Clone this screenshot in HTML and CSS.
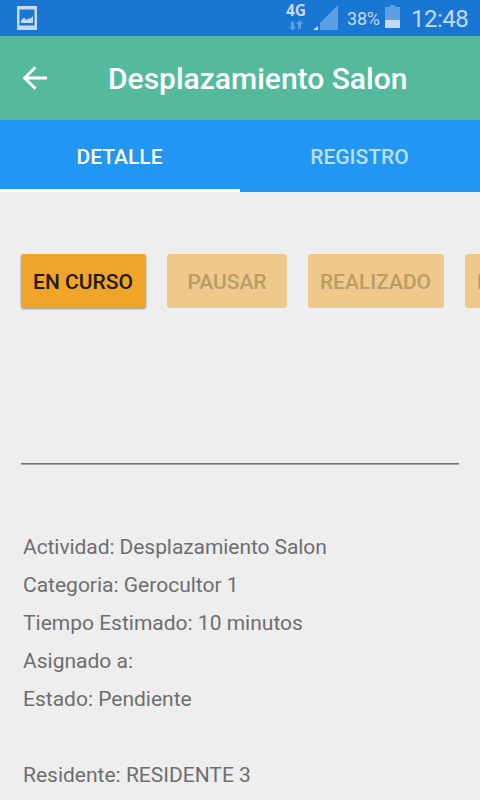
FILE: index.html
```
<!DOCTYPE html>
<html lang="es">
<head>
	<meta charset="UTF-8">
	<title>Desplazamiento Salon</title>
	<link rel="stylesheet" href="styles.css">
</head>
<body>
	<div id="status">
		<svg class="picture" width="20" height="24" viewBox="0 0 20 24">
			<path d="M0 0h20v24H0z M2.500 3.500v16h15v-16z" fill="#c4daf4" fill-rule="evenodd"/>
			<path d="M4 17v-2.500l3-3 2.500 2.500 2-1.500h2l2.500-2.500V17z" fill="#c4daf4"/>
		</svg>
		<div class="network">
			<span>4G</span>
			<svg width="14" height="11" viewBox="0 0 14 11">
				<path d="M2 1.500h3V7h2l-3.500 3.500L0 7h2z M9 9V4H7l3.500-4L14 4h-2v5z" fill="#5e9fe1"/>
			</svg>
		</div>
		<svg class="signal" width="25" height="25" viewBox="0 0 25 25">
			<path d="M7 25V18L25 0v25z" fill="#5e9fe1"/>
			<path d="M0 25l5-4v4z" fill="#d3e3f6"/>
		</svg>
		<span class="percent">38%</span>
		<svg class="battery" width="15" height="23" viewBox="0 0 15 23">
			<path d="M0 2h5V0h5v2h5v21H0z" fill="#5e9fe1"/>
			<path d="M0 15h15v8H0z" fill="#c4daf4"/>
		</svg>
		<span class="time">12:48</span>
	</div>
	<div id="header">
		<svg class="back" width="24" height="24" viewBox="0 0 24 24">
			<path d="M24 12H2M12.500 1.200L1.700 12l10.800 10.800" fill="none" stroke="#fff" stroke-width="3"/>
		</svg>
		<h1>Desplazamiento Salon</h1>
	</div>
	<ul id="tabs">
		<li class="active">DETALLE</li>
		<li>REGISTRO</li>
	</ul>
	<div id="main">
		<div class="buttons">
			<button class="btn1">EN CURSO</button>
			<button class="btn2" disabled>PAUSAR</button>
			<button class="btn3" disabled>REALIZADO</button>
			<button class="btn4" disabled>NO REALIZADO</button>
		</div>
		<div class="line"></div>
		<div class="detail">
			<p class="name">Actividad: Desplazamiento Salon</p>
			<p>Categoria: Gerocultor 1</p>
			<p>Tiempo Estimado: 10 minutos</p>
			<p>Asignado a:</p>
			<p>Estado: Pendiente</p>
			<p class="resident">Residente: RESIDENTE 3</p>
		</div>
	</div>
</body>
</html>
```

FILE: styles.css
```
h1,p,ul,li {
	padding: 0;
	margin: 0;
}

body {
	margin: 0;
	height: 800px;
	overflow: hidden;
	background: #eee;
	font-family: Roboto, "Liberation Sans", sans-serif;
}

ul {
	list-style: none;
}

#status {
	display: flex;
	height: 36px;
	background: #1976d2;
	color: #c4daf4;
}

#status .picture {
	margin: 6px 0 0 17px;
}

#status .network {
	width: 21px;
	margin-left: 249px;
}

#status .network span {
	display: block;
	height: 20px;
	line-height: 20px;
	font-family: "Open Sans", sans-serif;
	font-size: 15.5px;
	font-weight: bold;
}

#status .network svg {
	display: block;
	margin-left: 3px;
}

#status .signal {
	margin: 5px 0 0 6px;
}

#status .percent {
	width: 38px;
	margin-left: 9px;
	line-height: 38px;
	font-size: 18px;
	letter-spacing: -0.2px;
}

#status .battery {
	margin-top: 5px;
}

#status .time {
	margin-left: 11px;
	line-height: 38px;
	font-size: 24px;
	letter-spacing: -0.5px;
}

#header {
	display: flex;
	align-items: center;
	height: 84px;
	background: #54b99d;
	color: #fff;
}

#header .back {
	margin: -1px 0 0 23px;
}

#header h1 {
	margin-left: 61px;
	font-size: 30px;
	font-weight: 500;
	white-space: nowrap;
}

#tabs {
	display: flex;
	height: 72px;
	background: #2196f3;
}

#tabs li {
	box-sizing: border-box;
	width: 240px;
	padding-right: 1px;
	border-bottom: 3px solid #2196f3;
	line-height: 74px;
	font-size: 21px;
	font-weight: 500;
	text-align: center;
	color: #bce0fb;
}

#tabs .active {
	border-bottom-color: #fff;
	color: #fff;
}

#main {
	padding: 62px 21px 0;
}

.buttons {
	display: flex;
	gap: 21px;
	height: 58px;
	margin-right: -21px;
	margin-left: -4px;
	padding-left: 4px;
	overflow: hidden;
}

.buttons button {
	flex: none;
	height: 54px;
	padding: 2px 1px 0 0;
	border: 0;
	border-radius: 3px;
	background: #efa42a;
	box-shadow: 0 1px 2px rgba(0,0,0,.4);
	font-family: inherit;
	font-size: 21px;
	font-weight: 500;
	color: #241903;
}

.buttons button:disabled {
	background: #eec98b;
	box-shadow: none;
	color: #ba9c69;
}

.buttons .btn1 {
	width: 125px;
}

.buttons .btn2 {
	width: 120px;
	padding-right: 0;
}

.buttons .btn3 {
	width: 136px;
}

.buttons .btn4 {
	padding: 2px 12px 0;
}

.line {
	height: 1px;
	margin-top: 151px;
	border-bottom: 1px solid #a5a5a5;
	background: #717171;
}

.detail {
	padding: 63px 2px 0;
	color: #6e6e6e;
}

.detail p {
	height: 38px;
	line-height: 38px;
	font-size: 21px;
}

.detail .name {
	letter-spacing: -0.07px;
}

.detail .resident {
	margin-top: 38px;
}
```
